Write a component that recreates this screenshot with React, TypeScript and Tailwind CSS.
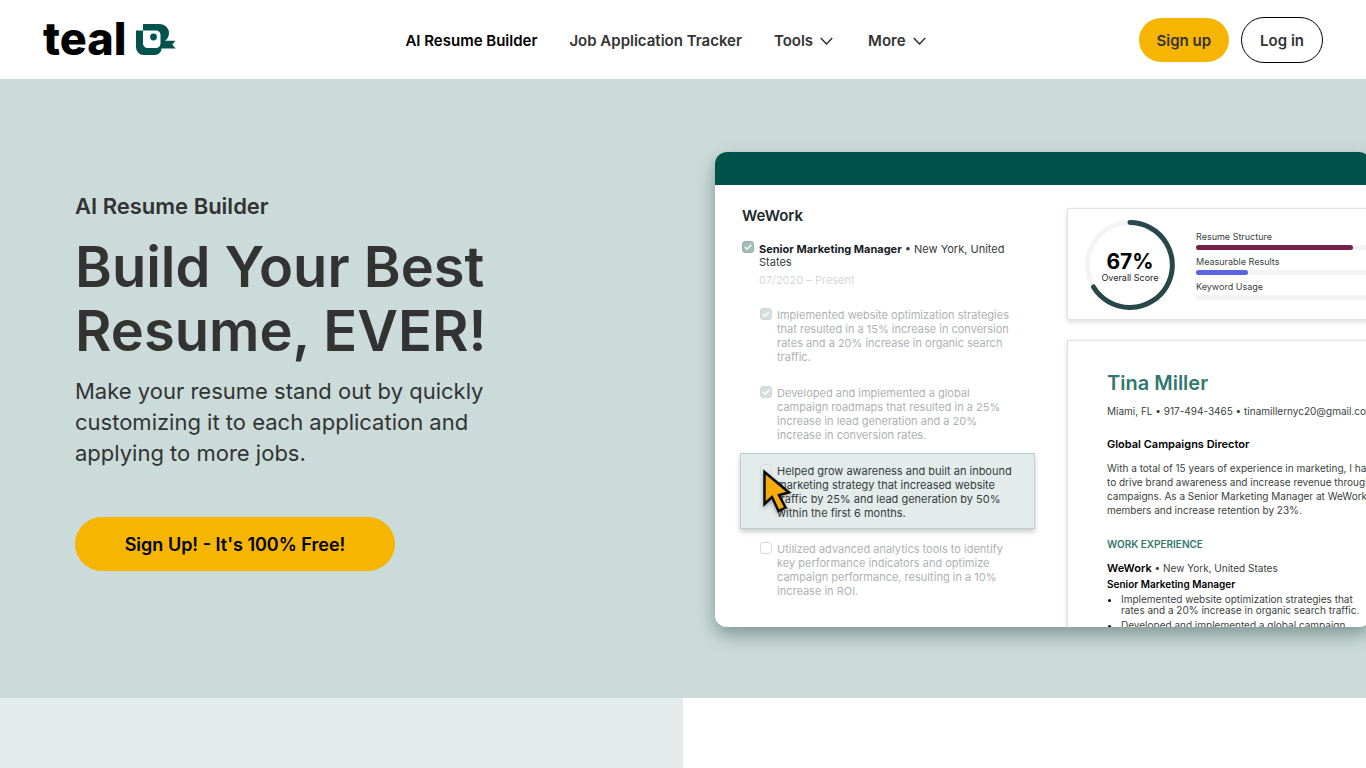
import React from "react";

const bullets = [
  {
    checked: true,
    lines: [
      "Implemented website optimization strategies",
      "that resulted in a 15% increase in conversion",
      "rates and a 20% increase in organic search",
      "traffic.",
    ],
  },
  {
    checked: true,
    lines: [
      "Developed and implemented a global",
      "campaign roadmaps that resulted in a 25%",
      "increase in lead generation and a 20%",
      "increase in conversion rates.",
    ],
  },
  {
    checked: false,
    active: true,
    lines: [
      "Helped grow awareness and built an inbound",
      "marketing strategy that increased website",
      "traffic by 25% and lead generation by 50%",
      "within the first 6 months.",
    ],
  },
  {
    checked: false,
    lines: [
      "Utilized advanced analytics tools to identify",
      "key performance indicators and optimize",
      "campaign performance, resulting in a 10%",
      "increase in ROI.",
    ],
  },
];

const metrics = [
  { label: "Resume Structure", value: 90, color: "bg-[#74204a]" },
  { label: "Measurable Results", value: 30, color: "bg-[#5c63e0]" },
  { label: "Keyword Usage", value: 0, color: "bg-transparent" },
];

function Lines({ lines }: { lines: string[] }) {
  return (
    <>
      {lines.map((line) => (
        <span key={line} className="block whitespace-nowrap">
          {line}
        </span>
      ))}
    </>
  );
}

function Logo() {
  return (
    <a href="#" aria-label="Teal home" className="flex items-center gap-[10px] pr-4">
      <span className="pb-[2px] text-[45px] leading-[44px] font-extrabold text-black">teal</span>
      <svg width="40" height="32" viewBox="0 0 40 32" aria-hidden="true">
        <path
          fill="#00524c"
          fillRule="evenodd"
          d="M7 0H24a9 9 0 0 1 9 9c0 3.200-1.500 6-4 7.700h10.500l-3.200 3.900 3.200 3.900H25.500a6.500 6.500 0 0 1-6.500 6.500H7.500A7.500 7.500 0 0 1 0 23.500V6.500h7zM7 6.500V19.500a4.500 4.500 0 0 0 4.500 4.500h8.500a4.500 4.500 0 0 0 4.500-4.500V11a4.500 4.500 0 0 0-4.500-4.500z"
        />
        <circle cx="17.500" cy="13" r="3.400" fill="#00524c" />
      </svg>
    </a>
  );
}

function Chevron() {
  return (
    <svg width="13" height="8" viewBox="0 0 13 8" fill="none" stroke="currentColor" strokeWidth="1.500" aria-hidden="true">
      <path d="M.8 1 6.500 7 12.200 1" />
    </svg>
  );
}

function Tick({ checked, strong, label }: { checked: boolean; strong?: boolean; label: string }) {
  const tone = strong
    ? "checked:border-[#8fb0aa] checked:bg-[#a3beb9]"
    : "checked:border-[#ccdad8] checked:bg-[#d3dfdd]";
  return (
    <span className="grid h-3 w-3 shrink-0 place-items-center">
      <input
        type="checkbox"
        aria-label={label}
        defaultChecked={checked}
        className={`peer col-start-1 row-start-1 h-3 w-3 appearance-none rounded-[3px] border border-[#d3dfdd] ${tone}`}
      />
      <svg
        viewBox="0 0 8 6"
        className="pointer-events-none col-start-1 row-start-1 hidden h-[6px] w-2 peer-checked:block"
        fill="none"
        stroke="#fff"
        strokeWidth="1.400"
        aria-hidden="true"
      >
        <path d="M.8 3 3 5.200 7.300.7" />
      </svg>
    </span>
  );
}

function Header() {
  return (
    <header className="flex h-20 items-center justify-between border-b border-[#cbdbd9] bg-white px-[43px]">
      <Logo />
      <nav className="flex items-center gap-8 pt-[2px] text-[15px] leading-6 font-semibold text-[#333]">
        <a href="#" className="text-black">
          AI Resume Builder
        </a>
        <a href="#">Job Application Tracker</a>
        <button type="button" className="flex items-center gap-[7px] pr-[3px]">
          Tools <Chevron />
        </button>
        <button type="button" className="flex items-center gap-[7px]">
          More <Chevron />
        </button>
      </nav>
      <div className="flex items-center gap-3 text-[15px] leading-6 font-semibold text-[#333]">
        <a href="#" className="flex h-11 items-center rounded-full bg-[#f6b500] px-[18px] pt-[2px]">
          Sign up
        </a>
        <a href="#" className="flex h-[46px] items-center rounded-full border border-black px-[18px] pt-[2px]">
          Log in
        </a>
      </div>
    </header>
  );
}

function Editor() {
  return (
    <section className="w-[352px] shrink-0 pt-[22px] pl-[25px] text-[11px] leading-[14px] text-[#adb2b1]">
      <h2 className="pl-[2px] text-[15px] leading-[18px] font-semibold text-[#1b2a2b]">WeWork</h2>
      <div className="flex gap-[5px] pt-4 pl-[2px]">
        <Tick checked strong label="Senior Marketing Manager" />
        <div className="text-[#333b3c]">
          <p className="pt-[2px] leading-[13px]">
            <span className="block whitespace-nowrap">
              <b className="font-bold text-[#14201f]">Senior Marketing Manager</b> • New York, United
            </span>
            States
          </p>
          <p className="pt-1 text-[#d5d8d8]">07/2020 – Present</p>
        </div>
      </div>
      <ul className="pt-[10px]">
        {bullets.map((b) => (
          <li
            key={b.lines[0]}
            className={
              b.active
                ? "relative mb-[2px] w-[295px] border border-[#b9cfcc] bg-[#e4eceb] pt-[10px] pb-2 pl-[19px] text-[#333b3c] shadow-[0_3px_5px_rgba(0,0,0,0.2)]"
                : "border border-transparent pt-[10px] pb-[10px] pl-[19px]"
            }
          >
            <label className="flex gap-[5px]">
              <Tick checked={b.checked} label={b.lines[0]} />
              <span>
                <Lines lines={b.lines} />
              </span>
            </label>
            {b.active && (
              <svg className="absolute top-[14px] left-[21px] h-[46px] w-8 drop-shadow-[0_2px_2px_rgba(0,0,0,0.3)]" viewBox="0 0 32 46" aria-hidden="true">
                <path d="M2.500 4v32l7.500-7 6.500 14 7-3.500-6.500-12.500 10-2.500z" fill="#f5ac0a" stroke="#0b0b0b" strokeWidth="2.500" />
              </svg>
            )}
          </li>
        ))}
      </ul>
    </section>
  );
}

function Score() {
  return (
    <section className="flex h-[112px] items-center gap-[20px] border border-[#dfe2e2] pt-[2px] pl-4 shadow-[0_2px_5px_rgba(0,0,0,0.14)]">
      <div className="grid h-[92px] w-[92px] shrink-0 place-items-center">
        <svg viewBox="0 0 92 92" className="col-start-1 row-start-1 h-[92px] w-[92px]" fill="none" strokeWidth="5" aria-hidden="true">
          <circle cx="46" cy="46" r="42.500" stroke="#f4f4f4" />
          <path d="M46 3.500a42.500 42.500 0 1 1-36.500 64.500" stroke="#28474a" strokeLinecap="round" />
        </svg>
        <div className="col-start-1 row-start-1 pt-[3px] text-center">
          <p className="text-[21px] leading-[22px] font-bold text-black">67%</p>
          <p className="text-[9px] leading-[10px] text-[#222]">Overall Score</p>
        </div>
      </div>
      <dl className="grow pt-[6px]">
        {metrics.map((m) => (
          <div key={m.label} className="pb-[6px]">
            <dt className="pb-[2px] text-[9px] leading-[12px] text-[#3a3f40]">{m.label}</dt>
            <dd className="h-[5px] rounded-full bg-[#f4f4f4]">
              <div className={`h-full rounded-full ${m.color}`} style={{ width: `${m.value}%` }} />
            </dd>
          </div>
        ))}
      </dl>
    </section>
  );
}

function Resume() {
  return (
    <article className="mt-5 h-[300px] border border-[#dfe2e2] pt-[30px] pl-[39px] text-[10px] leading-[14px] whitespace-nowrap text-[#3a3f40] shadow-[0_2px_5px_rgba(0,0,0,0.14)]">
      <h2 className="text-[20px] leading-6 font-semibold text-[#33786c]">Tina Miller</h2>
      <p className="pt-[9px]">Miami, FL • 917-494-3465 • tinamillernyc20@gmail.com</p>
      <h3 className="pt-[19px] text-[11px] font-semibold text-black">Global Campaigns Director</h3>
      <p className="pt-[10px]">
        <Lines
          lines={[
            "With a total of 15 years of experience in marketing, I have",
            "to drive brand awareness and increase revenue through",
            "campaigns. As a Senior Marketing Manager at WeWork",
            "members and increase retention by 23%.",
          ]}
        />
      </p>
      <h3 className="pt-5 font-semibold text-[#33786c]">WORK EXPERIENCE</h3>
      <p className="pt-[10px]">
        <b className="text-[11px] font-semibold text-black">WeWork</b> • New York, United States
      </p>
      <p className="pt-[2px] font-semibold text-black">Senior Marketing Manager</p>
      <ul className="list-disc pt-[3px] pl-[14px] leading-[11px] marker:text-black">
        <li>
          <Lines lines={["Implemented website optimization strategies that", "rates and a 20% increase in organic search traffic."]} />
        </li>
        <li className="pt-1">Developed and implemented a global campaign</li>
      </ul>
    </article>
  );
}

export default function App() {
  return (
    <div className="min-h-screen overflow-x-hidden bg-white font-['Inter',sans-serif]">
      <Header />
      <main>
        <div className="flex items-center overflow-hidden bg-[#cbdbd9] pt-[72px] pb-[71px] pl-[75px]">
          <div className="w-[640px] shrink-0 pb-4 text-[#333]">
            <p className="text-[22px] leading-7 font-semibold">AI Resume Builder</p>
            <h1 className="pt-[15px] text-[56px] leading-[64px] font-semibold">
              Build Your Best
              <br />
              Resume, EVER!
            </h1>
            <p className="pt-[13px] text-[22px] leading-[31px]">
              Make your resume stand out by quickly
              <br />
              customizing it to each application and
              <br />
              applying to more jobs.
            </p>
            <a
              href="#"
              className="mt-12 flex h-[54px] w-80 items-center justify-center rounded-full bg-[#f6b500] pt-[2px] text-lg font-semibold text-black"
            >
              Sign Up! - It's 100% Free!
            </a>
          </div>
          <div className="min-w-[656px] grow rounded-xl shadow-[0_8px_18px_rgba(40,70,66,0.45)]">
            <div className="h-[475px] overflow-hidden rounded-xl bg-white">
              <div className="h-[33px] bg-[#00524c]" />
              <div className="flex">
                <Editor />
                <div className="min-w-0 grow pt-[23px]">
                  <Score />
                  <Resume />
                </div>
              </div>
            </div>
          </div>
        </div>
        <div className="grid h-[70px] grid-cols-2">
          <div className="bg-[#e4eceb]" />
          <div className="bg-white" />
        </div>
      </main>
    </div>
  );
}
